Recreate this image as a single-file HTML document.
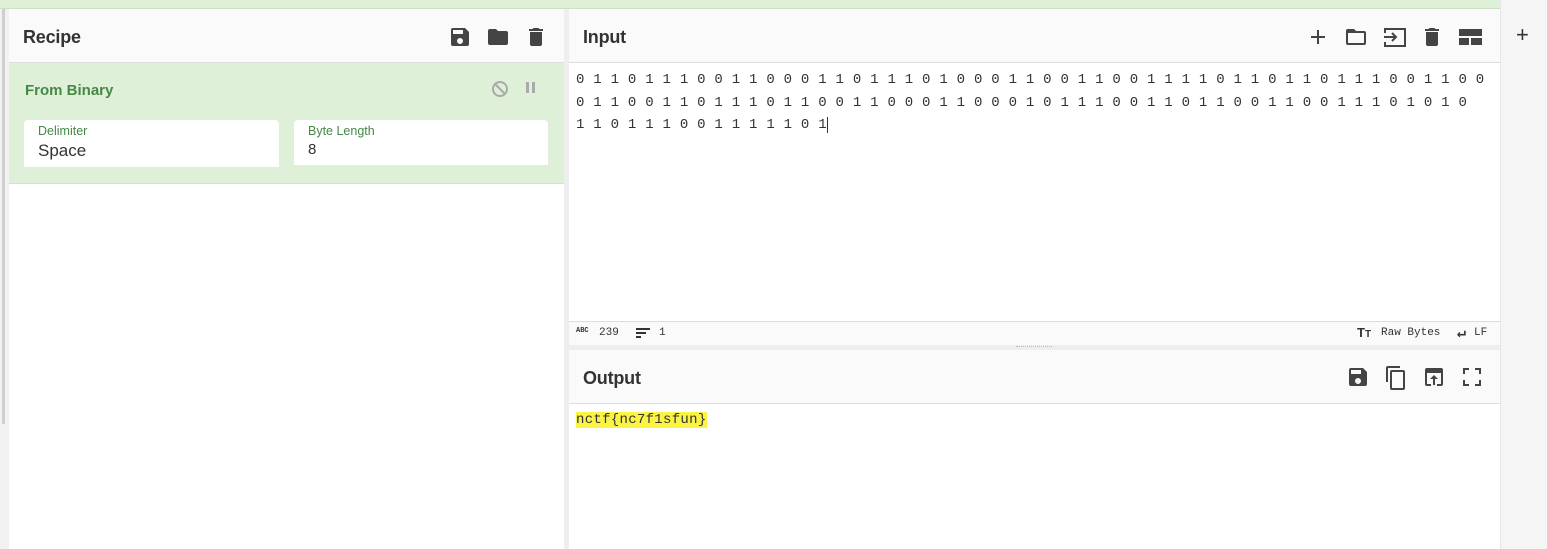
<!DOCTYPE html>
<html><head><meta charset="utf-8"><style>
*{box-sizing:border-box;margin:0;padding:0}
body{width:1547px;height:549px;overflow:hidden;background:#fff;font-family:"Liberation Sans",sans-serif;position:relative}
.topbar{position:absolute;left:0;top:0;width:1500px;height:9px;background:#dff0d8;border-bottom:1px solid #d0dfc8}
.leftstrip{position:absolute;left:0;top:9px;width:9px;height:540px;background:#f2f2f2}
.leftstrip:after{content:"";position:absolute;left:2px;top:0;width:3px;height:415px;background:#cfcfcf}
.farright{position:absolute;left:1500px;top:0;width:47px;height:549px;background:#f5f5f5;border-left:1px solid #e6e6e6}
.farright span{position:absolute;left:15px;top:22px;font-size:22px;color:#333;font-weight:300}
.panel{position:absolute;background:#fff}
.hdr{position:absolute;left:0;right:0;height:54px;background:#fafafa;border-bottom:1px solid #ddd}
.hdr h2{position:absolute;left:14px;top:18px;font-size:18px;font-weight:bold;color:#333;letter-spacing:-0.2px}
.icons{position:absolute;top:15px;display:flex;gap:0}
.icons svg{display:block}
.divider{position:absolute;top:9px;left:564px;width:5px;height:540px;background:#eee}
.mono{font-family:"Liberation Mono",monospace}
</style></head><body>
<div class="topbar"></div>
<div class="leftstrip"></div>

<div class="panel" style="left:9px;top:9px;width:555px;height:540px">
  <div class="hdr" style="top:0"><h2>Recipe</h2>
    <div class="icons" style="left:439px;top:16px">
      <svg width="24" height="24" viewBox="0 0 24 24"><path fill="#444" d="M17 3H5a2 2 0 0 0-2 2v14a2 2 0 0 0 2 2h14a2 2 0 0 0 2-2V7l-4-4zm-5 16a3 3 0 1 1 0-6 3 3 0 0 1 0 6zm3-10H5V5h10v4z"/></svg>
      <svg style="margin-left:14px" width="24" height="24" viewBox="0 0 24 24"><path fill="#444" d="M10 4H4a2 2 0 0 0-2 2v12a2 2 0 0 0 2 2h16a2 2 0 0 0 2-2V8a2 2 0 0 0-2-2h-8l-2-2z"/></svg>
      <svg style="margin-left:14px" width="24" height="24" viewBox="0 0 24 24"><path fill="#444" d="M6 19a2 2 0 0 0 2 2h8a2 2 0 0 0 2-2V7H6v12zM19 4h-3.5l-1-1h-5l-1 1H5v2h14V4z"/></svg>
    </div>
  </div>
  <div style="position:absolute;left:0;top:54px;width:555px;height:121px;background:#dff0d8;border-bottom:1px solid #cfe3c6">
    <div style="position:absolute;left:16px;top:19px;font-size:15px;font-weight:bold;color:#468847">From Binary</div>
    <svg style="position:absolute;left:482px;top:17px" width="18" height="18" viewBox="0 0 18 18"><circle cx="9" cy="9" r="7" fill="none" stroke="#aaa" stroke-width="2"/><path d="M4 4l10 10" stroke="#aaa" stroke-width="2"/></svg>
    <div style="position:absolute;left:517px;top:19px;width:3px;height:11px;background:#aaa"></div>
    <div style="position:absolute;left:523px;top:19px;width:3px;height:11px;background:#aaa"></div>
    <div style="position:absolute;left:15px;top:57px;width:255px;height:47px;background:#fff;border-radius:4px 4px 0 0">
      <div style="position:absolute;left:14px;top:4px;font-size:12.5px;color:#468847">Delimiter</div>
      <div style="position:absolute;left:14px;top:21px;font-size:17px;color:#333">Space</div>
    </div>
    <div style="position:absolute;left:285px;top:57px;width:254px;height:45px;background:#fff;border-radius:4px 4px 0 0">
      <div style="position:absolute;left:14px;top:4px;font-size:12.5px;color:#468847">Byte Length</div>
      <div style="position:absolute;left:14px;top:21px;font-size:15px;color:#333">8</div>
    </div>
  </div>
</div>

<div class="divider"></div>

<div class="panel" style="left:569px;top:9px;width:931px;height:540px">
  <div class="hdr" style="top:0"><h2>Input</h2>
    <div class="icons" style="left:737px;top:16px">
      <svg width="24" height="24" viewBox="0 0 24 24"><path fill="#444" d="M19 13h-6v6h-2v-6H5v-2h6V5h2v6h6v2z"/></svg>
      <svg style="margin-left:14px" width="24" height="24" viewBox="0 0 24 24"><path fill="#444" d="M20 6h-8l-2-2H4a2 2 0 0 0-2 2v12a2 2 0 0 0 2 2h16a2 2 0 0 0 2-2V8a2 2 0 0 0-2-2zm0 12H4V8h16v10z"/></svg>
      <svg style="margin-left:14px" width="26" height="24" viewBox="0 0 26 24"><path fill="none" stroke="#444" stroke-width="2" d="M3 8V4h20v17H3v-4M2 12h12M10 8l4 4-4 4"/></svg>
      <svg style="margin-left:12px" width="24" height="24" viewBox="0 0 24 24"><path fill="#444" d="M6 19a2 2 0 0 0 2 2h8a2 2 0 0 0 2-2V7H6v12zM19 4h-3.5l-1-1h-5l-1 1H5v2h14V4z"/></svg>
      <svg style="margin-left:14px" width="24" height="24" viewBox="0 0 24 24"><path fill="#444" d="M1 4h23v7H1zM1 13h10v7H1zM13 13h11v7H13z"/></svg>
    </div>
  </div>
  <div class="mono" style="position:absolute;left:7px;top:60px;font-size:14px;line-height:22.5px;color:#333;letter-spacing:0.25px;white-space:pre">0 1 1 0 1 1 1 0 0 1 1 0 0 0 1 1 0 1 1 1 0 1 0 0 0 1 1 0 0 1 1 0 0 1 1 1 1 0 1 1 0 1 1 0 1 1 1 0 0 1 1 0 0
0 1 1 0 0 1 1 0 1 1 1 0 1 1 0 0 1 1 0 0 0 1 1 0 0 0 1 0 1 1 1 0 0 1 1 0 1 1 0 0 1 1 0 0 1 1 1 0 1 0 1 0
1 1 0 1 1 1 0 0 1 1 1 1 1 0 1<span style="border-right:1px solid #333"></span></div>
  <div style="position:absolute;left:0;top:312px;width:931px;height:24px;background:#fafafa;border-top:1px solid #ddd;font-size:11px;color:#333" class="mono">
    <span style="position:absolute;left:7px;top:5px;font-size:7px;font-weight:bold">ABC</span>
    <span style="position:absolute;left:30px;top:5px">239</span>
    <svg style="position:absolute;left:67px;top:6px" width="14" height="11" viewBox="0 0 14 11"><path fill="#333" d="M0 0h14v2H0zM0 4h10v2H0zM0 8h5v2H0z"/></svg>
    <span style="position:absolute;left:90px;top:5px">1</span>
    <span style="position:absolute;left:788px;top:3px;font-family:'Liberation Sans';font-weight:bold;font-size:13px">T<span style="font-size:10px">T</span></span>
    <span style="position:absolute;left:812px;top:5px">Raw Bytes</span>
    <span style="position:absolute;left:888px;top:1px;font-size:15px;font-weight:bold">↵</span>
    <span style="position:absolute;left:905px;top:5px">LF</span>
  </div>
  <div style="position:absolute;left:0;top:336px;width:931px;height:5px;background:#eee"><div style="position:absolute;left:447px;top:1px;width:36px;height:1px;border-top:1px dotted #bbb"></div></div>
  <div class="hdr" style="top:341px"><h2>Output</h2>
    <div class="icons" style="left:777px;top:15px">
      <svg width="24" height="24" viewBox="0 0 24 24"><path fill="#444" d="M17 3H5a2 2 0 0 0-2 2v14a2 2 0 0 0 2 2h14a2 2 0 0 0 2-2V7l-4-4zm-5 16a3 3 0 1 1 0-6 3 3 0 0 1 0 6zm3-10H5V5h10v4z"/></svg>
      <svg style="margin-left:14px" width="24" height="26" viewBox="0 0 24 26"><path fill="#444" d="M16 1H4a2 2 0 0 0-2 2v14h2V3h12V1zm3 4H8a2 2 0 0 0-2 2v16a2 2 0 0 0 2 2h11a2 2 0 0 0 2-2V7a2 2 0 0 0-2-2zm0 18H8V7h11v16z"/></svg>
      <svg style="margin-left:14px" width="24" height="24" viewBox="0 0 24 24"><path fill="#444" d="M19 3H5a2 2 0 0 0-2 2v14a2 2 0 0 0 2 2h4v-2H5V8h14v11h-4v2h4a2 2 0 0 0 2-2V5a2 2 0 0 0-2-2zm-7 7l-4 4h3v6h2v-6h3l-4-4z"/></svg>
      <svg style="margin-left:14px" width="24" height="24" viewBox="0 0 24 24"><path fill="#444" d="M5 15H3v6h6v-2H5v-4zM3 9h2V5h4V3H3v6zm16 10h-4v2h6v-6h-2v4zM15 3v2h4v4h2V3h-6z"/></svg>
    </div>
  </div>
  <div class="mono" style="position:absolute;left:7px;top:402px;font-size:14px;line-height:19px;color:#333;letter-spacing:0.3px"><span style="background:#fcf444">nctf{nc7f1sfun}</span></div>
</div>

<div class="farright"><span>+</span></div>
</body></html>
